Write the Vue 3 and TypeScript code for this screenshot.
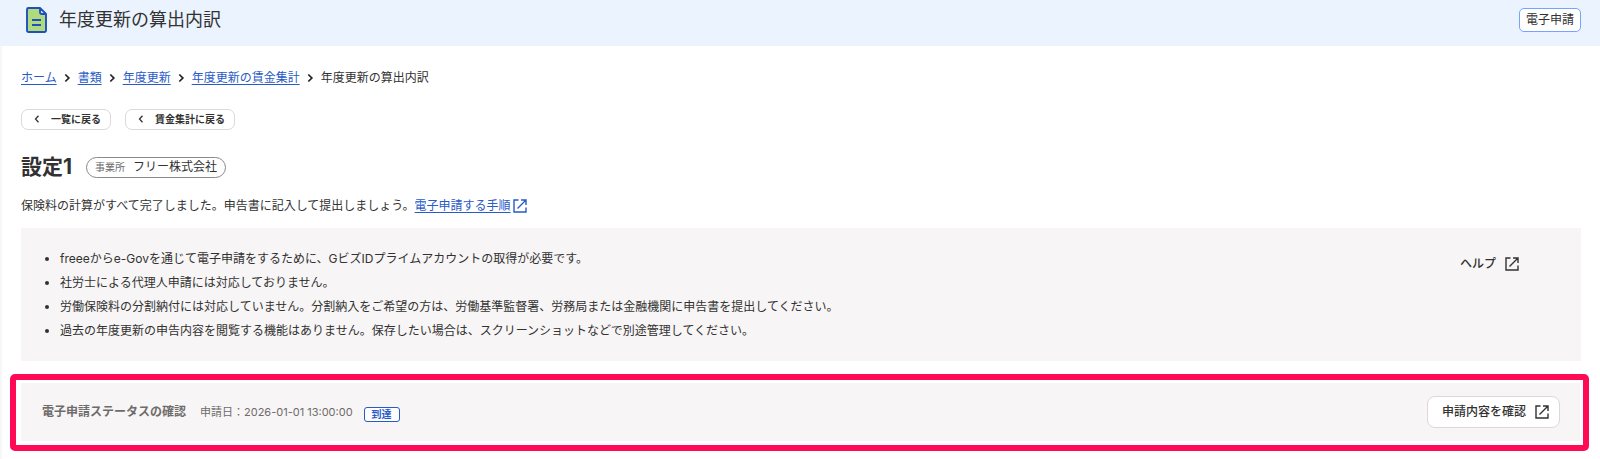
<script setup lang="ts">
interface Crumb {
  label: string
  current?: boolean
}

const crumbs: Crumb[] = [
  { label: 'ホーム' },
  { label: '書類' },
  { label: '年度更新' },
  { label: '年度更新の賃金集計' },
  { label: '年度更新の算出内訳', current: true },
]

const backButtons: string[] = ['一覧に戻る', '賃金集計に戻る']

const notes: string[] = [
  'freeeからe-Govを通じて電子申請をするために、GビズIDプライムアカウントの取得が必要です。',
  '社労士による代理人申請には対応しておりません。',
  '労働保険料の分割納付には対応していません。分割納入をご希望の方は、労働基準監督署、労務局または金融機関に申告書を提出してください。',
  '過去の年度更新の申告内容を閲覧する機能はありません。保存したい場合は、スクリーンショットなどで別途管理してください。',
]
</script>

<template>
  <div class="page">
    <header class="header">
      <svg class="doc-icon" viewBox="0 0 22 26" aria-hidden="true">
        <path d="M3 1H14L20 7V23a2 2 0 0 1-2 2H3a2 2 0 0 1-2-2V3a2 2 0 0 1 2-2z" fill="#b0db7c" />
        <path d="M14 1V5a2 2 0 0 0 2 2H20z" fill="#ebf3ff" />
        <path
          d="M2.500 1H14L20 7V23.500a1.500 1.500 0 0 1-1.500 1.500H2.500a1.500 1.500 0 0 1-1.500-1.500V2.500a1.500 1.500 0 0 1 1.500-1.500zM14 1V5a2 2 0 0 0 2 2H20M6 13H15M6 18H15"
          fill="none"
          stroke="#1e50be"
          stroke-width="1.900"
          stroke-linejoin="round"
        />
      </svg>
      <h1 class="title">年度更新の算出内訳</h1>
      <button type="button" class="apply">電子申請</button>
    </header>

    <main>
      <div class="content">
        <nav class="crumbs" aria-label="パンくずリスト">
          <template v-for="(crumb, i) in crumbs" :key="crumb.label">
            <svg v-if="i > 0" class="sep" viewBox="0 0 8 10" aria-hidden="true">
              <path d="M1.500 1L5.500 5L1.500 9" fill="none" stroke="#222" stroke-width="2" />
            </svg>
            <span v-if="crumb.current" aria-current="page">{{ crumb.label }}</span>
            <a v-else href="#">{{ crumb.label }}</a>
          </template>
        </nav>

        <div class="back">
          <button v-for="label in backButtons" :key="label" type="button">
            <svg viewBox="0 0 6 8" aria-hidden="true">
              <path d="M4.500 .7L1.500 4L4.500 7.300" fill="none" stroke="#333" stroke-width="1.300" />
            </svg>
            {{ label }}
          </button>
        </div>

        <div class="heading">
          <h2>設定1</h2>
          <span class="office"><small>事業所</small>フリー株式会社</span>
        </div>

        <p class="lead">
          保険料の計算がすべて完了しました。申告書に記入して提出しましょう。<a href="#" class="guide"
            ><span>電子申請する手順</span
            ><svg class="ext" viewBox="0 0 14 14" aria-hidden="true">
              <path d="M5.500 1H1V13H13V8.500M8 1H13V6M13 1L4.500 9.500" /></svg
          ></a>
        </p>

        <section class="notes">
          <ul>
            <li v-for="note in notes" :key="note">{{ note }}</li>
          </ul>
          <a href="#" class="help">
            ヘルプ
            <svg class="ext" viewBox="0 0 14 14" aria-hidden="true">
              <path d="M5.500 1H1V13H13V8.500M8 1H13V6M13 1L4.500 9.500" />
            </svg>
          </a>
        </section>
      </div>

      <div class="highlight">
        <section class="status">
          <h3>電子申請ステータスの確認</h3>
          <span class="date">申請日：2026-01-01 13:00:00</span>
          <span class="badge">到達</span>
          <button type="button" class="confirm">
            申請内容を確認
            <svg class="ext" viewBox="0 0 14 14" aria-hidden="true">
              <path d="M5.500 1H1V13H13V8.500M8 1H13V6M13 1L4.500 9.500" />
            </svg>
          </button>
        </section>
      </div>
    </main>
  </div>
</template>

<style>
body {
  background: #fff;
}
</style>

<style scoped>
.page {
  font-family: Inter, "Noto Sans CJK JP", sans-serif;
  font-size: 12px;
  line-height: 20px;
  color: #323232;
  padding-bottom: 8px;
  box-shadow: inset 2px 0 1px #f7f7f8;
}

h1,
h2,
h3,
p,
ul {
  margin: 0;
}

button {
  font: inherit;
  color: inherit;
  background: #fff;
  box-sizing: border-box;
  cursor: pointer;
}

a {
  color: #285ac8;
  text-underline-offset: 2px;
}

.header {
  display: flex;
  align-items: center;
  padding: 7px 19px 13px 26px;
  background: #ebf3ff;
}

.doc-icon {
  width: 22px;
  height: 26px;
}

.title {
  margin-left: 11px;
  font-size: 18px;
  line-height: 26px;
  font-weight: 400;
}

.apply {
  height: 24px;
  margin-left: auto;
  padding: 0 6px;
  line-height: 20px;
  border: 1px solid #73a5ff;
  border-radius: 5px;
}

.content {
  padding: 0 19px 0 21px;
}

.crumbs {
  display: flex;
  align-items: center;
  padding-top: 22px;
}

.sep {
  width: 7px;
  height: 10px;
  margin: 0 7px;
}

.back {
  display: flex;
  gap: 14px;
  margin-top: 21px;
}

.back button {
  display: flex;
  align-items: center;
  height: 21px;
  padding: 0 9px 1px 12px;
  font-size: 10px;
  font-weight: 600;
  border: 1px solid #dcd8d8;
  border-radius: 7px;
}

.back svg {
  width: 6px;
  height: 8px;
  margin-right: 11px;
}

.heading {
  display: flex;
  align-items: center;
  gap: 14px;
  margin-top: 23px;
}

h2 {
  font-size: 21px;
  line-height: 28px;
}

.office {
  display: flex;
  align-items: center;
  height: 19px;
  padding: 0 8px;
  border: 1px solid #8c8989;
  border-radius: 11px;
}

.office small {
  margin-right: 8px;
  font-size: 10px;
  color: #6e6b6b;
}

.lead {
  margin-top: 15px;
}

.guide {
  text-decoration: none;
}

.guide span {
  text-decoration: underline;
}

.ext {
  width: 14px;
  height: 14px;
  fill: none;
  stroke: currentColor;
  stroke-width: 1.4;
}

.guide .ext {
  margin-left: 2px;
  vertical-align: -3px;
}

.notes {
  display: flex;
  justify-content: space-between;
  align-items: flex-start;
  margin-top: 12px;
  padding: 19px 62px 18px 39px;
  background: #f7f5f5;
}

.notes ul {
  padding: 0;
  line-height: 24px;
}

.help {
  display: flex;
  align-items: center;
  gap: 9px;
  margin-top: 7px;
  font-weight: 500;
  color: #323232;
  text-decoration: none;
}

.highlight {
  margin: 13px 11px 0 10px;
  padding: 3px 3px 4px 5px;
  border: 6px solid #ff0a54;
  border-radius: 5px;
}

.status {
  display: flex;
  align-items: center;
  padding: 13px 20px 13px 21px;
  background: #f7f5f5;
}

h3 {
  font-size: 12px;
  color: #6e6b6b;
}

.date {
  margin-left: 14px;
  font-size: 11px;
  color: #6e6b6b;
}

.badge {
  margin: 4px 0 0 11px;
  padding: 0 7px;
  font-size: 10px;
  line-height: 13px;
  font-weight: 700;
  color: #285ac8;
  background: #fff;
  border: 1px solid #285ac8;
  border-radius: 3px;
}

.confirm {
  display: flex;
  align-items: center;
  gap: 9px;
  height: 32px;
  margin-left: auto;
  padding: 0 10px 0 14px;
  font-weight: 500;
  border: 1px solid #dcd8d8;
  border-radius: 8px;
}
</style>
